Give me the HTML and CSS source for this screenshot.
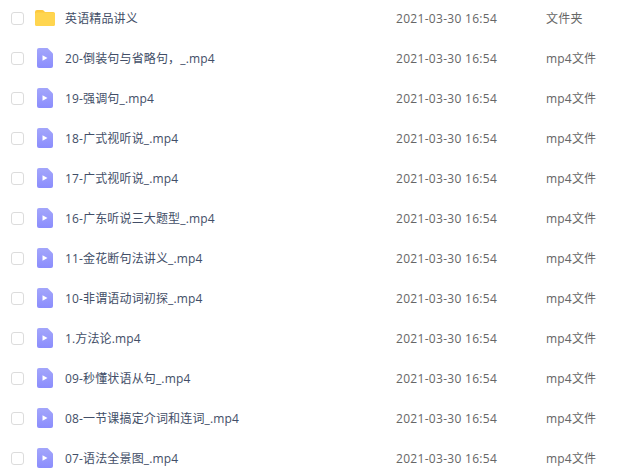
FILE: index.html
```html
<!DOCTYPE html>
<html lang="zh">
<head>
  <meta charset="UTF-8" />
  <meta name="viewport" content="width=device-width, initial-scale=1.0"/>
  <title>文件列表</title>
  <link rel="stylesheet" href="styles.css">
</head>
<body>
  <svg class="defs" width="0" height="0" aria-hidden="true">
    <defs>
      <linearGradient id="fileFill" x1="0" y1="0" x2="0" y2="1">
        <stop offset="0" stop-color="#a3a6fb"/>
        <stop offset="1" stop-color="#8b8dfd"/>
      </linearGradient>
      <symbol id="folderIcon" viewBox="0 0 20 16">
        <path d="M0 2a2 2 0 0 1 2-2h5.2c.7 0 1.2.3 1.6.8L10 2h8a2 2 0 0 1 2 2v10a2 2 0 0 1-2 2H2a2 2 0 0 1-2-2z" fill="#fdc93f"/>
        <path d="M0 4.2a1.6 1.6 0 0 1 1.6-1.6h16.8A1.6 1.6 0 0 1 20 4.2V14a2 2 0 0 1-2 2H2a2 2 0 0 1-2-2z" fill="#ffd54f"/>
      </symbol>
      <symbol id="videoIcon" viewBox="0 0 16 20">
        <path d="M2 0h8.5L16 5.5V18a2 2 0 0 1-2 2H2a2 2 0 0 1-2-2V2a2 2 0 0 1 2-2z" fill="url(#fileFill)"/>
        <path d="M5.5 7.2v5.6L10.5 10z" fill="#fff"/>
      </symbol>
    </defs>
  </svg>

  <ul class="file-list">
    <li class="file-row">
      <span class="check"></span>
      <svg class="icon"><use href="#folderIcon" width="20" height="16" x="0" y="2"/></svg>
      <span class="name">英语精品讲义</span>
      <span class="date">2021-03-30 16:54</span>
      <span class="type">文件夹</span>
    </li>
    <li class="file-row">
      <span class="check"></span>
      <svg class="icon"><use href="#videoIcon" width="16" height="20" x="2" y="0"/></svg>
      <span class="name">20-倒装句与省略句，_.mp4</span>
      <span class="date">2021-03-30 16:54</span>
      <span class="type">mp4文件</span>
    </li>
    <li class="file-row">
      <span class="check"></span>
      <svg class="icon"><use href="#videoIcon" width="16" height="20" x="2" y="0"/></svg>
      <span class="name">19-强调句_.mp4</span>
      <span class="date">2021-03-30 16:54</span>
      <span class="type">mp4文件</span>
    </li>
    <li class="file-row">
      <span class="check"></span>
      <svg class="icon"><use href="#videoIcon" width="16" height="20" x="2" y="0"/></svg>
      <span class="name">18-广式视听说_.mp4</span>
      <span class="date">2021-03-30 16:54</span>
      <span class="type">mp4文件</span>
    </li>
    <li class="file-row">
      <span class="check"></span>
      <svg class="icon"><use href="#videoIcon" width="16" height="20" x="2" y="0"/></svg>
      <span class="name">17-广式视听说_.mp4</span>
      <span class="date">2021-03-30 16:54</span>
      <span class="type">mp4文件</span>
    </li>
    <li class="file-row">
      <span class="check"></span>
      <svg class="icon"><use href="#videoIcon" width="16" height="20" x="2" y="0"/></svg>
      <span class="name">16-广东听说三大题型_.mp4</span>
      <span class="date">2021-03-30 16:54</span>
      <span class="type">mp4文件</span>
    </li>
    <li class="file-row">
      <span class="check"></span>
      <svg class="icon"><use href="#videoIcon" width="16" height="20" x="2" y="0"/></svg>
      <span class="name">11-金花断句法讲义_.mp4</span>
      <span class="date">2021-03-30 16:54</span>
      <span class="type">mp4文件</span>
    </li>
    <li class="file-row">
      <span class="check"></span>
      <svg class="icon"><use href="#videoIcon" width="16" height="20" x="2" y="0"/></svg>
      <span class="name">10-非谓语动词初探_.mp4</span>
      <span class="date">2021-03-30 16:54</span>
      <span class="type">mp4文件</span>
    </li>
    <li class="file-row">
      <span class="check"></span>
      <svg class="icon"><use href="#videoIcon" width="16" height="20" x="2" y="0"/></svg>
      <span class="name">1.方法论.mp4</span>
      <span class="date">2021-03-30 16:54</span>
      <span class="type">mp4文件</span>
    </li>
    <li class="file-row">
      <span class="check"></span>
      <svg class="icon"><use href="#videoIcon" width="16" height="20" x="2" y="0"/></svg>
      <span class="name">09-秒懂状语从句_.mp4</span>
      <span class="date">2021-03-30 16:54</span>
      <span class="type">mp4文件</span>
    </li>
    <li class="file-row">
      <span class="check"></span>
      <svg class="icon"><use href="#videoIcon" width="16" height="20" x="2" y="0"/></svg>
      <span class="name">08-一节课搞定介词和连词_.mp4</span>
      <span class="date">2021-03-30 16:54</span>
      <span class="type">mp4文件</span>
    </li>
    <li class="file-row">
      <span class="check"></span>
      <svg class="icon"><use href="#videoIcon" width="16" height="20" x="2" y="0"/></svg>
      <span class="name">07-语法全景图_.mp4</span>
      <span class="date">2021-03-30 16:54</span>
      <span class="type">mp4文件</span>
    </li>
  </ul>
</body>
</html>
```

FILE: styles.css
```css
html, body {
  height: 100%;
  overflow: hidden;
}

body {
  margin: 0;
  background-color: #fff;
  font-family: 'Open Sans', 'Noto Sans CJK SC', sans-serif;
  font-size: 12px;
  line-height: 16px;
  color: #666;
}

.defs {
  display: block;
  height: 0;
}

.file-list {
  list-style: none;
  margin: -2px 0 0;
  padding: 0 0 0 11px;
}

.file-row {
  display: flex;
  align-items: center;
  height: 40px;
}

.check {
  flex: none;
  width: 13px;
  height: 13px;
  border: 1px solid #dcdcdc;
  border-radius: 3px;
  box-sizing: border-box;
}

.icon {
  flex: none;
  width: 20px;
  height: 20px;
  margin-left: 11px;
}

.name, .date, .type {
  flex: none;
  padding-top: 2px;
}

.name {
  width: 331px;
  margin-left: 10px;
  letter-spacing: 0.15px;
  color: #424e67;
}

.date {
  width: 150px;
  letter-spacing: 0.3px;
}

.type {
  letter-spacing: 0.2px;
}
```
